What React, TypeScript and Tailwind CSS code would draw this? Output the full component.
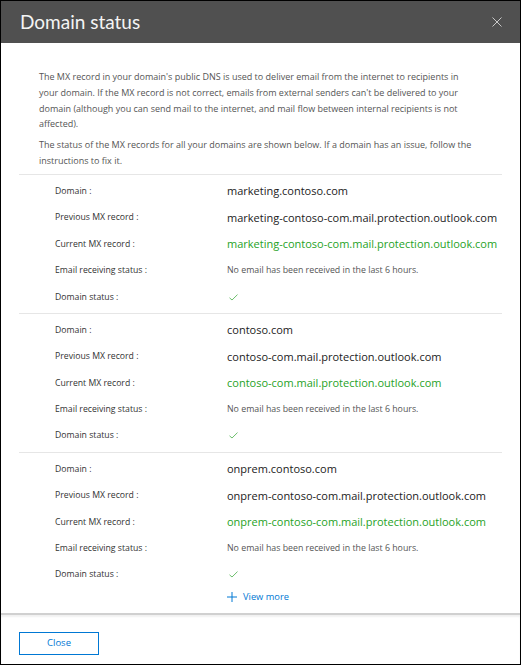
import React from "react";

const font = { fontFamily: '"Segoe UI", "Open Sans", "Noto Sans", sans-serif' };

type Domain = { domain: string; prev: string; cur: string };

const domains: Domain[] = [
  {
    domain: "marketing.contoso.com",
    prev: "marketing-contoso-com.mail.protection.outlook.com",
    cur: "marketing-contoso-com.mail.protection.outlook.com",
  },
  {
    domain: "contoso.com",
    prev: "contoso-com.mail.protection.outlook.com",
    cur: "contoso-com.mail.protection.outlook.com",
  },
  {
    domain: "onprem.contoso.com",
    prev: "onprem-contoso-com.mail.protection.outlook.com",
    cur: "onprem-contoso-com.mail.protection.outlook.com",
  },
];

function Check() {
  return (
    <svg width="9" height="7" viewBox="0 0 9 7" fill="none">
      <path d="M0.5 3.8 L3 6 L8.5 0.6" stroke="#5cb85c" strokeWidth="0.9" />
    </svg>
  );
}

function Row({ label, children }: { label: string; children: React.ReactNode }) {
  return (
    <div className="flex items-center h-[26.4px]">
      <div className="w-[208px] pl-[36px] text-[8.7px] text-[#333]">{label}</div>
      <div className="flex-1 flex items-center">{children}</div>
    </div>
  );
}

export default function App() {
  return (
    <div
      className="w-[521px] h-[665px] border border-black bg-white flex flex-col overflow-hidden"
      style={font}
    >
      <div className="h-[42px] bg-[#505050] flex items-center justify-between pl-[19px] pr-[18px] shrink-0">
        <div
          className="text-[19px] text-[#f4f4f4] leading-none pb-[2px]"
          style={{ fontFamily: '"Lato", "Open Sans", sans-serif' }}
        >
          Domain status
        </div>
        <svg width="10" height="10" viewBox="0 0 10 10">
          <path d="M0.5 0.5 L9.5 9.5 M9.5 0.5 L0.5 9.5" stroke="#c8c8c8" strokeWidth="1" />
        </svg>
      </div>

      <div className="flex-1 flex flex-col">
        <div className="px-[38px] pt-[26px] pb-[5px] text-[9px] leading-[15.8px] text-[#555]">
          <p className="whitespace-nowrap">
            The MX record in your domain's public DNS is used to deliver email from the internet to recipients in
            <br />
            your domain. If the MX record is not correct, emails from external senders can't be delivered to your
            <br />
            domain (although you can send mail to the internet, and mail flow between internal recipients is not
            <br />
            affected).
          </p>
          <p className="whitespace-nowrap mt-[5px]">
            The status of the MX records for all your domains are shown below. If a domain has an issue, follow the
            <br />
            instructions to fix it.
          </p>
        </div>

        {domains.map((d) => (
          <div key={d.domain} className="mx-[18px] border-t border-[#e6e6e6] pt-[3.5px] pb-[2.5px]">
            <Row label="Domain :">
              <span className="text-[11px] text-[#222]">{d.domain}</span>
            </Row>
            <Row label="Previous MX record :">
              <span className="text-[11px] text-[#222]">{d.prev}</span>
            </Row>
            <Row label="Current MX record :">
              <span className="text-[11px] text-[#26a226]">{d.cur}</span>
            </Row>
            <Row label="Email receiving status :">
              <span className="text-[8.8px] text-[#555]">No email has been received in the last 6 hours.</span>
            </Row>
            <Row label="Domain status :">
              <span className="pl-[2px]">
                <Check />
              </span>
            </Row>
          </div>
        ))}

        <div className="mx-[18px] flex items-center h-[20px] -mt-[4px]">
          <div className="w-[208px]" />
          <div className="flex items-center gap-[6px] text-[#0078d4]">
            <svg width="10" height="10" viewBox="0 0 10 10">
              <path d="M5 0 V10 M0 5 H10" stroke="#0078d4" strokeWidth="1" />
            </svg>
            <span className="text-[9.3px]">View more</span>
          </div>
        </div>
      </div>

      <div className="shrink-0 h-[51px] border-t-[2px] border-[#d0d0d0] shadow-[inset_0_2px_2px_rgba(0,0,0,0.06)] flex items-start pt-[17px] pl-[18px]">
        <button className="w-[80px] h-[23px] border border-[#0078d4] text-[#0078d4] text-[9.5px] bg-white">
          Close
        </button>
      </div>
    </div>
  );
}
